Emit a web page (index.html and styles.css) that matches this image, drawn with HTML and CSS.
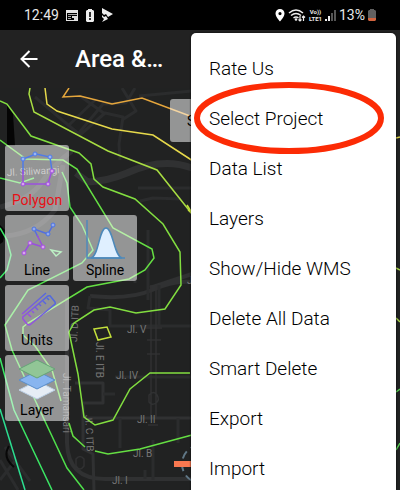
FILE: index.html
```html
<!DOCTYPE html>
<html lang="en">
<head>
<meta charset="utf-8">
<meta name="viewport" content="width=device-width, initial-scale=1">
<title>Area &amp;…</title>
<link rel="stylesheet" href="styles.css">
</head>
<body>
<div class="app">
  <div class="status">
    <div class="status-group">
      <span>12:49</span>
      <svg viewBox="0 0 14 13" width="14" height="13"><path fill="#e4e4e4" fill-rule="evenodd" d="M1 1h12v11H1zM2 4v7h10V4z"/><path fill="#aaa" d="M3 5h9v1H3zM3 7h3v1H3zM3 9h3v1H3z"/><path fill="#ddd" d="M7 7h5v4H9V9H7z"/></svg>
      <svg viewBox="0 0 10 13" width="10" height="13"><path fill="#eee" fill-rule="evenodd" d="M3 0h4v1h1l1 1v10l-1 1H2l-1-1V2l1-1h1zM4.200 3v5h1.600V3zM4.200 9v2h1.600V9z"/></svg>
      <svg viewBox="0 0 13 14" width="13" height="14"><path fill="#eee" d="M1 0l11 6-5 3-2-3-2 1-2-2zM1 7l2 2 2-1 2 3-6 3 2-3-2-2z"/></svg>
    </div>
    <div class="status-group status-right">
      <svg viewBox="0 0 10 13" width="10" height="13"><path fill="#fff" fill-rule="evenodd" d="M5 0a4.500 4.500 0 0 1 4.500 4.600C9.500 8 5 12.500 5 12.500S.5 8 .5 4.600A4.500 4.500 0 0 1 5 0zm0 3a1.600 1.600 0 1 0 0 3.200A1.600 1.600 0 0 0 5 3z"/></svg>
      <svg viewBox="0 0 18 14" width="18" height="14"><g fill="none" stroke="#eee" stroke-width="1.500"><path d="M1 5q7-6 14 0M3 7.500q5-4 10 0M5.500 10q2.500-2 5 0"/><path stroke-width="1.200" d="M12 8v5m-1.500-1.500L12 13l1.500-1.500M15.500 13V8M14 9.500 15.500 8 17 9.500"/></g><circle cx="8" cy="11.500" r="1.300" fill="#eee"/></svg>
      <span class="lte"><span>Vo))</span><span>LTE1</span></span>
      <svg viewBox="0 0 11 11" width="11" height="11"><path fill="#eee" d="M0 9h2v2H0zM3 6h2v5H3z"/><path fill="#555" d="M6 3h2v8H6zM9 0h2v11H9z"/></svg>
      <span>13%</span>
      <svg viewBox="0 0 8 12" width="8" height="12"><path fill="#606060" d="M2 0h4v1h1l1 1v7H0V2l1-1h1z"/><path fill="#d2643e" d="M0 9h8v2l-1 1H1l-1-1z"/></svg>
    </div>
  </div>

  <header class="bar">
    <button class="back" aria-label="Back"><svg viewBox="0 0 18 18" width="18" height="18"><path fill="none" stroke="#fff" stroke-width="2" d="M17.500 9H2M9.500 1 1.500 9l8 8"/></svg></button>
    <h1>Area &amp;…</h1>
  </header>

  <main class="map">
    <svg class="terrain" viewBox="0 88 400 402" preserveAspectRatio="xMinYMin slice" aria-hidden="true">
      <path fill="#050505" d="M7 105l6 9 2 32H7zM0 225l5 5-2 12-3 2z"/>
      <g fill="none" stroke="#303132" stroke-linejoin="round">
        <path stroke-width="7" d="M76 173l12 9q20-1 39-9 35-16 65-5"/>
        <path stroke-width="5" d="M0 207q30-7 42-25t30-31M5 236q31-2 50-26l8-45"/>
        <path stroke-width="4" d="M90 296q40 4 62-6t40-8M192 274l-42 14M67 298v145q1 36 38 36h87"/>
        <path stroke-width="3" d="M82 418h110M75 383h28v20H83v46l10 5 1 36"/>
        <path stroke-width="3" stroke="#2b2c2d" d="M35 97l45 38 25-22 18 4-4 27 1 16M80 96l25 18M78 134l25-30 23-1 9-15M68 126l28-27M122 88l14 23-14 9M139 96l53-5M138 188h54M140 201l13-3 28 1M103 394h12M90 296l-2 12 22 2v16h82M135 270v13M148 230v70M159 285v40M115 377h77M178 418v25M145 470v9M153 440v40M120 448v-30M0 460l18 30M5 447l25 34M0 480l15-19"/>
        <path stroke-width="1.500" d="M151 285v132M156 285v132M145 328h17M147 340h14M147 354h13M148 425h10M149 395q5-5 8 0t-1 8-7-1zM76 466v-7q4-5 8 0v7q-4 6-8 0z"/>
      </g>
      <path d="M9 446q-7 11 5 21" fill="none" stroke="#080808" stroke-width="2"/>
      <g class="street">
        <text x="127" y="333">Jl. V</text>
        <text x="116" y="379">Jl. IV</text>
        <text x="137" y="423">Jl. II</text>
        <text x="133" y="457">Jl. B</text>
        <text x="112" y="484">Jl. I</text>
        <text x="187" y="284">J</text>
        <text transform="translate(77 342) rotate(-87)">Jl. D ITB</text>
        <text transform="translate(96 342) rotate(90)">Jl. E ITB</text>
        <text transform="translate(85 415) rotate(87)">Jl. C ITB</text>
        <text transform="translate(63 373) rotate(90)">Jl. Tamansari</text>
      </g>
      <g class="street street-near">
        <text transform="translate(7 176) rotate(-3)">Jl. Siliwangi</text>
      </g>
      <g class="contours">
        <path stroke="#e5a63c" d="M69 88l-6 9 17-1 32 8 30-6 48 18 12 5"/>
        <path stroke="#e6d94b" d="M45 88l2 16 10 7 55 18 41 6 40 26"/>
        <path stroke="#a8dd42" d="M30 88l-1 6 5 18 74 39 49 19 35 44"/>
        <path stroke="#82de40" d="M0 101l7 3 24 32 48 17 12 11 3 15 9 8 32 12 28 25 17 28 1 33-16 24-29 4-26-6-16 3-20 13-5 9 9 42 6 43 11 8 18-5 17-31 20-16h40"/>
        <path stroke="#65df43" d="M0 140l26 19 37 1 14 9 36 59 39 21 2 9-9 12-16 9-42 8-59 36-5 4v8l12 11 17 24 9 31M69 423l4 13 12 11M95 451l13 3 32-5 52-14"/>
        <path stroke="#4fdf4b" d="M0 178l20 5 14-5M62 172l5 11 3 24 12 18 11 25-11 13-54 27-23 35 7 25 23 50 32 68 17 22"/>
        <path stroke="#3be665" d="M0 228l7 12 4 15-4 15-7 8M0 358l14 52 38 80"/>
        <path stroke="#2cdf91" d="M0 409l25 81"/>
        <path stroke="#74e287" d="M51 250l10 2-5 4z"/>
        <path stroke="#c3df3b" d="M94 329l13-2 4 10-13 3zM187 205l5 8M188 210l6 5"/>
        <path stroke="#d8ce49" d="M396 138l4-1"/>
        <path stroke="#a8d14b" d="M396 268l4 2M396 318l4 4"/>
        <path stroke="#57cc52" d="M396 392l4-3M396 450l4-7"/>
      </g>
      <circle cx="201" cy="464" r="19" fill="none" stroke="#607786" stroke-width="2" stroke-dasharray="8 5"/>
      <path fill="#f87850" d="M174 461h20v6h-20z"/>
    </svg>

    <div class="tools">
      <button class="tool active">
        <svg viewBox="0 0 40 38" width="40" height="38"><g fill="none" stroke-width="1.500"><path stroke="#4f7be8" d="M6 25V10l13-5 14 3 2 14"/><path stroke="#9b50de" d="M35 21l-4 14H6V21"/></g><g fill="#9ab6f3" stroke="#4f7be8"><circle cx="6" cy="10" r="2"/><circle cx="18" cy="5" r="2"/><circle cx="33" cy="8" r="2"/></g><g fill="#d9a2ef" stroke="#9b50de"><circle cx="35" cy="22" r="2"/><circle cx="31" cy="35" r="2"/><circle cx="6" cy="35" r="2"/></g></svg>
        <span>Polygon</span>
      </button>
      <button class="tool">
        <svg viewBox="0 0 40 38" width="40" height="38"><g fill="none" stroke-width="1.500"><path stroke="#536ee0" d="M36 6l-5 9-14-5 4 8"/><path stroke="#9850dc" d="M20 16l6 12-13-4-6 10"/></g><g fill="#94a9ee" stroke="#4b74df"><circle cx="36" cy="6" r="2"/><circle cx="31" cy="15" r="2"/><circle cx="17" cy="10" r="2"/></g><g fill="#d9a2ef" stroke="#a451dd"><circle cx="26" cy="28" r="2"/><circle cx="13" cy="24" r="2"/><circle cx="7" cy="34" r="2"/></g></svg>
        <span>Line</span>
      </button>
      <button class="tool">
        <svg viewBox="0 0 40 42" width="40" height="42"><path fill="#dfefff" stroke="#4d89ba" stroke-width="1.500" d="M6 39C14 37 14 9 21 9S29 37 37 39z"/><path fill="none" stroke="#4d89ba" stroke-width="1.500" d="M2 1v38h38"/></svg>
        <span>Spline</span>
      </button>
      <button class="tool units">
        <svg viewBox="0 0 40 38" width="40" height="38"><defs><linearGradient id="ruler" x1="0" y1="1" x2="1" y2="0"><stop stop-color="#a24de0"/><stop offset="1" stop-color="#466edc"/></linearGradient></defs><g fill="none" stroke="url(#ruler)" stroke-width="1.500"><path d="M7 27 31 7q2-1 3 1l4 5q1 2-1 3L14 35q-2 2-4 0l-4-5q-1-2 1-3zM5 25 29 4"/><path d="M11 25l3 3M15 22l2 2M18 18l3 3M22 15l2 2M26 12l3 3M30 9l2 2"/></g></svg>
        <span>Units</span>
      </button>
      <button class="tool layer">
        <svg viewBox="0 0 40 42" width="40" height="42"><path fill="#e6edf5" stroke="#bdd1e7" d="M2 31l18-9 18 9-18 9z"/><path fill="#88b5ef" stroke="#598dca" d="M2 21l18-9 18 9-18 9z"/><path fill="#91c696" stroke="#65a477" d="M2 10l18-9 18 9-18 9z"/></svg>
        <span>Layer</span>
      </button>
    </div>
    <button class="side">S</button>
  </main>

  <nav class="menu" aria-label="More options">
    <button>Rate Us</button>
    <button class="picked">Select Project<svg class="ring" viewBox="0 0 190 72" aria-hidden="true"><ellipse cx="95" cy="36" rx="92" ry="33" fill="none" stroke="#fc2b05" stroke-width="6"/></svg></button>
    <button>Data List</button>
    <button>Layers</button>
    <button>Show/Hide WMS</button>
    <button>Delete All Data</button>
    <button>Smart Delete</button>
    <button>Export</button>
    <button>Import</button>
  </nav>
</div>
</body>
</html>
```
FILE: styles.css
```css
* { box-sizing: border-box; }

body {
  margin: 0;
  background: #222;
  font-family: Roboto, "Liberation Sans", sans-serif;
}

button {
  border: 0;
  padding: 0;
  background: none;
  font: inherit;
}

svg { display: block; flex: none; }

.app {
  position: relative;
  display: flex;
  flex-direction: column;
  min-height: 100vh;
  overflow: hidden;
}

.status {
  display: flex;
  justify-content: space-between;
  align-items: center;
  height: 30px;
  padding: 0 24px;
  background: #000;
  color: #e8e8e8;
  font-size: 14px;
}

.status-group {
  display: flex;
  align-items: center;
  gap: 6px;
}

.status-right { gap: 3px; }

.lte {
  display: grid;
  justify-items: center;
  font-size: 6px;
  font-weight: 700;
  line-height: 7px;
}

.bar {
  display: flex;
  align-items: center;
  gap: 37px;
  height: 58px;
  padding: 0 20px;
  background: #222;
  color: #fff;
}

h1 {
  margin: 0;
  font-size: 24px;
  font-weight: 500;
}

.map {
  position: relative;
  flex: 1;
  padding: 57px 5px 0;
  overflow: hidden;
  background: #212222;
}

.terrain {
  position: absolute;
  inset: 0;
  width: 100%;
  height: 100%;
}

.street {
  fill: #777;
  font-size: 10px;
}

.street-near { fill: #999; }

.contours {
  fill: none;
  stroke-width: 1.5;
}

.tools {
  position: relative;
  display: grid;
  grid-template-columns: 64px 64px;
  gap: 4px;
}

.tool {
  display: flex;
  flex-direction: column;
  align-items: center;
  justify-content: space-between;
  height: 66px;
  padding: 4px 0 3px;
  border-radius: 3px;
  background: rgba(255, 255, 255, 0.52);
  color: #000;
  font-size: 14px;
  line-height: 16px;
}

.tool.active {
  grid-column: 1 / -1;
  width: 64px;
  color: #e81016;
}

.units, .layer { grid-column: 1; }

.side {
  position: absolute;
  top: 11px;
  left: 170px;
  width: 64px;
  height: 43px;
  padding-left: 17px;
  border-radius: 3px;
  background: rgba(255, 255, 255, 0.52);
  color: #000;
  font-size: 14px;
  text-align: left;
}

.menu {
  position: absolute;
  top: 33px;
  right: 4px;
  bottom: 0;
  width: 205px;
  padding-top: 10px;
  border-radius: 5px 5px 0 0;
  background: #fff;
  box-shadow: 0 0 2px #000;
}

.menu button {
  display: block;
  width: 100%;
  height: 50px;
  padding: 0 18px;
  color: #000;
  font-size: 19px;
  font-weight: 300;
  text-align: left;
}

.menu .picked { position: relative; }

.ring {
  position: absolute;
  top: -11px;
  left: 3px;
  width: 190px;
  height: 72px;
}
```
